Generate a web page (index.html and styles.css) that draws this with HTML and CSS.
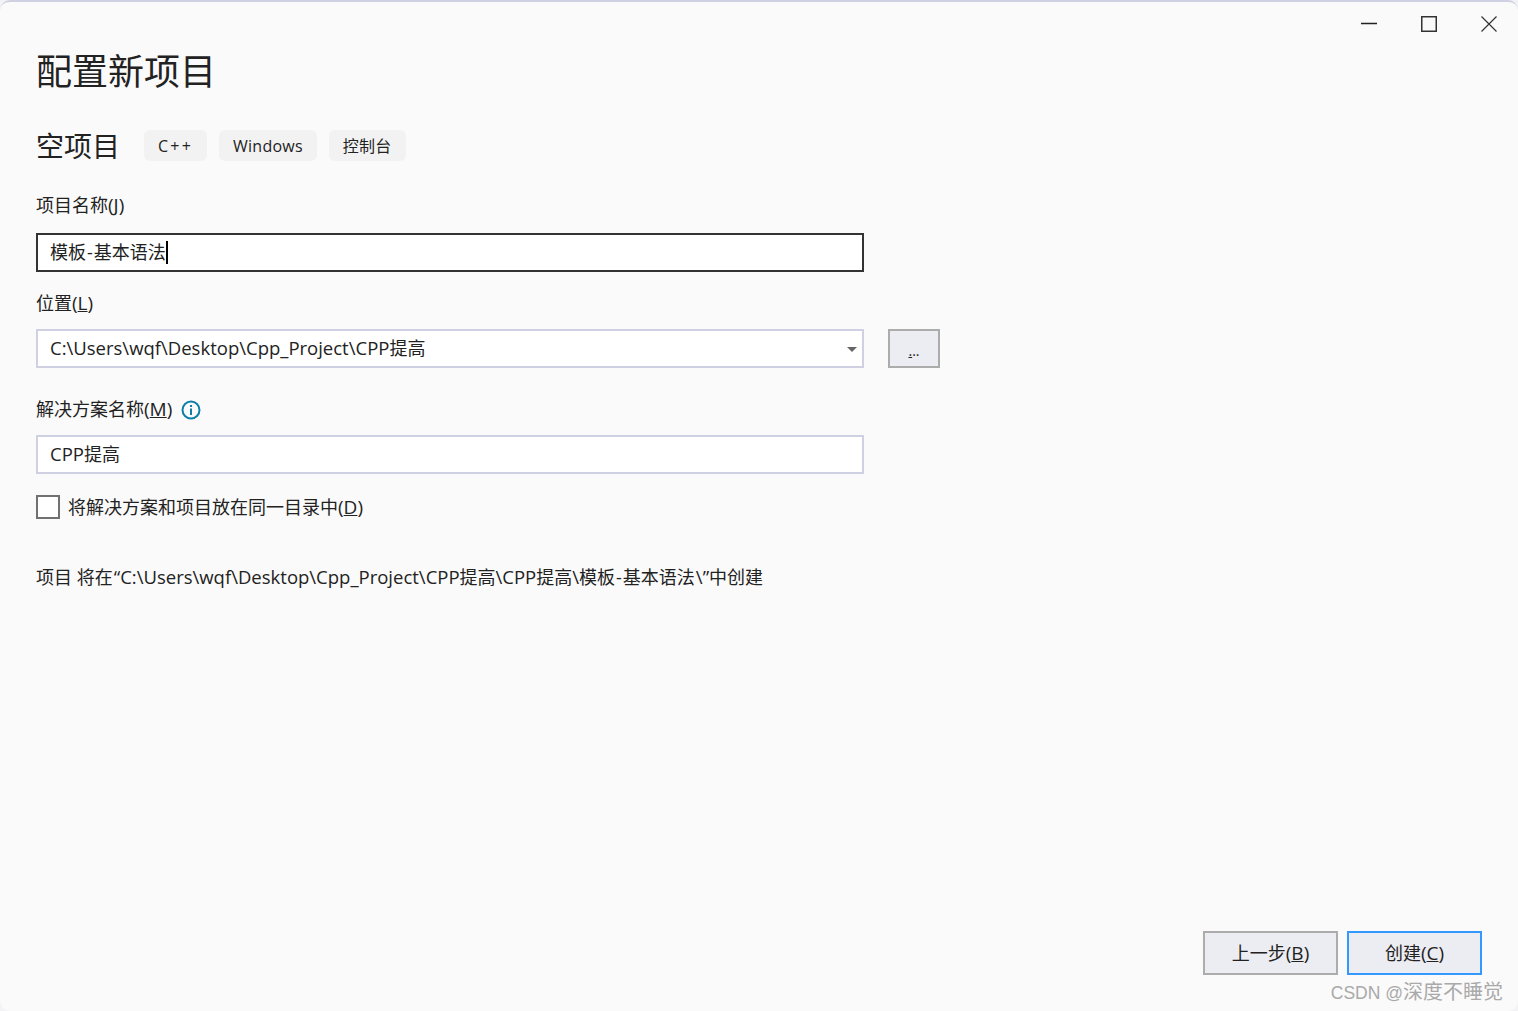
FILE: index.html
```html
<!DOCTYPE html>
<html lang="zh-CN">

<head>
    <meta charset="UTF-8">
    <title>配置新项目</title>
    <link rel="stylesheet" href="styles.css">
</head>

<body>
    <div class="window">
        <!-- Window controls -->
        <div class="title-bar">
            <div class="win-btn">
                <svg width="16" height="16" viewBox="0 0 16 16"><path d="M0 7.5H16" stroke="#222" stroke-width="1.4" fill="none"/></svg>
            </div>
            <div class="win-btn">
                <svg width="16" height="16" viewBox="0 0 16 16"><rect x="0.75" y="0.75" width="14.5" height="14.5" stroke="#333" stroke-width="1.5" fill="none"/></svg>
            </div>
            <div class="win-btn">
                <svg width="16" height="16" viewBox="0 0 16 16"><path d="M0.5 0.5L15.5 15.5M15.5 0.5L0.5 15.5" stroke="#333" stroke-width="1.2" fill="none"/></svg>
            </div>
        </div>

        <div class="content">
            <h1>配置新项目</h1>

            <div class="template-row">
                <h2>空项目</h2>
                <span class="tag tag-cpp">C++</span>
                <span class="tag">Windows</span>
                <span class="tag">控制台</span>
            </div>

            <!-- Form -->
            <label class="label first">项目名称<span class="key">(<u>J</u>)</span></label>
            <div class="field focused">模板<span class="dash">-</span>基本语法<span class="caret"></span></div>

            <label class="label second">位置<span class="key">(<u>L</u>)</span></label>
            <div class="location-row">
                <div class="field combo"><span class="lat">C:\Users\wqf\Desktop\Cpp_Project\CPP</span>提高<span class="arrow"></span></div>
                <div class="browse-btn"><u>.</u>..</div>
            </div>

            <label class="label third">解决方案名称<span class="key">(<u>M</u>)</span>
                <svg class="info" width="20" height="20" viewBox="0 0 20 20">
                    <circle cx="10" cy="10" r="8.5" stroke="#0e7fa8" stroke-width="2" fill="none"/>
                    <rect x="9" y="8.5" width="2" height="6.5" fill="#0e7fa8"/>
                    <rect x="9" y="5" width="2" height="2" fill="#0e7fa8"/>
                </svg>
            </label>
            <div class="field"><span class="lat">CPP</span>提高</div>

            <div class="check-row">
                <span class="checkbox"></span>
                <span class="check-text">将解决方案和项目放在同一目录中<span class="key">(<u>D</u>)</span></span>
            </div>

            <div class="path-note">项目 将在<span class="lat note-start">“C:\Users\wqf\Desktop\Cpp_Project\CPP</span>提高<span class="lat">\CPP</span>提高<span class="lat">\</span>模板<span class="dash">-</span>基本语法<span class="lat note-end">\”</span>中创建</div>
        </div>

        <div class="footer">
            <div class="btn">上一步<span class="key">(<u>B</u>)</span></div>
            <div class="btn primary">创建<span class="key">(<u>C</u>)</span></div>
        </div>

        <div class="watermark"><span class="watermark-lat">CSDN @</span>深度不睡觉</div>
    </div>
</body>

</html>
```

FILE: styles.css
```css
html,
body {
    margin: 0;
    padding: 0;
    background-color: #f3f3f6;
}

.window {
    position: relative;
    box-sizing: border-box;
    width: 1518px;
    height: 1011px;
    display: flex;
    flex-direction: column;
    background-color: #fafafa;
    border-top: 2px solid #cfd1e2;
    border-radius: 10px;
    overflow: hidden;
    font-family: "Open Sans", "Noto Sans CJK SC", sans-serif;
    font-size: 18px;
    color: #222;
}

.lat {
    font-size: 18.5px;
}

.key {
    font-size: 19px;
}

.dash {
    padding: 0 1px;
}

.note-start {
    padding-left: 1px;
}

.note-end {
    padding-left: 1px;
}

.title-bar {
    display: flex;
    justify-content: flex-end;
    height: 44px;
    margin-right: -1px;
}

.win-btn {
    width: 60px;
    display: flex;
    align-items: center;
    justify-content: center;
}

.content {
    padding-left: 36px;
}

h1 {
    margin: 0;
    height: 50px;
    font-size: 36px;
    line-height: 52px;
    font-weight: 400;
}

.template-row {
    display: flex;
    align-items: center;
    gap: 12px;
    margin-top: 34px;
    height: 31px;
}

h2 {
    margin: 0 12px 0 0;
    height: 31px;
    font-size: 28px;
    font-weight: 400;
    line-height: 33px;
}

.tag {
    padding: 0 14px;
    height: 31px;
    line-height: 33px;
    font-size: 16px;
    letter-spacing: 0.25px;
    background-color: #f2f2f2;
    border-radius: 6px;
}

.tag-cpp {
    letter-spacing: 2.2px;
}

.label {
    display: block;
    height: 24px;
    line-height: 24px;
}

.label.first {
    margin-top: 32px;
    margin-bottom: 16px;
}

.label.second {
    margin-top: 19px;
    margin-bottom: 14px;
}

.label.third {
    margin-top: 29px;
    margin-bottom: 14px;
}

.info {
    vertical-align: -4px;
    margin-left: 4px;
}

.field {
    position: relative;
    box-sizing: border-box;
    width: 828px;
    height: 39px;
    padding-left: 12px;
    line-height: 33px;
    background-color: #fff;
    border: 2px solid #cfd1e2;
}

.field.focused {
    line-height: 35px;
    border-color: #333;
}

.caret {
    display: inline-block;
    width: 2px;
    height: 23px;
    vertical-align: -5px;
    background-color: #000;
}

.location-row {
    display: flex;
    gap: 24px;
}

.arrow {
    position: absolute;
    right: 5px;
    top: 16px;
    border-left: 5px solid transparent;
    border-right: 5px solid transparent;
    border-top: 5px solid #666;
}

.browse-btn {
    box-sizing: border-box;
    width: 52px;
    height: 39px;
    line-height: 39px;
    text-align: center;
    font-size: 14px;
    background-color: #ecedf2;
    border: 2px solid #acacac;
}

.check-row {
    display: flex;
    align-items: center;
    gap: 8px;
    margin-top: 21px;
    height: 24px;
}

.check-text {
    line-height: 24px;
    height: 24px;
}

.checkbox {
    box-sizing: border-box;
    width: 24px;
    height: 24px;
    background-color: #fff;
    border: 2px solid #717171;
}

.path-note {
    margin-top: 46px;
    line-height: 24px;
}

.footer {
    display: flex;
    justify-content: flex-end;
    gap: 9px;
    margin-top: auto;
    padding: 0 36px 36px 0;
}

.btn {
    box-sizing: border-box;
    width: 135px;
    height: 44px;
    line-height: 40px;
    text-align: center;
    background-color: #ecedf2;
    border: 2px solid #acacac;
}

.btn.primary {
    border-color: #3399ff;
}

.watermark {
    position: absolute;
    right: 15px;
    bottom: 5px;
    font-family: "Liberation Sans", "Noto Sans CJK SC", sans-serif;
    font-size: 20px;
    line-height: 26px;
    color: #a9a9a9;
}

.watermark-lat {
    font-size: 17.5px;
}
```
